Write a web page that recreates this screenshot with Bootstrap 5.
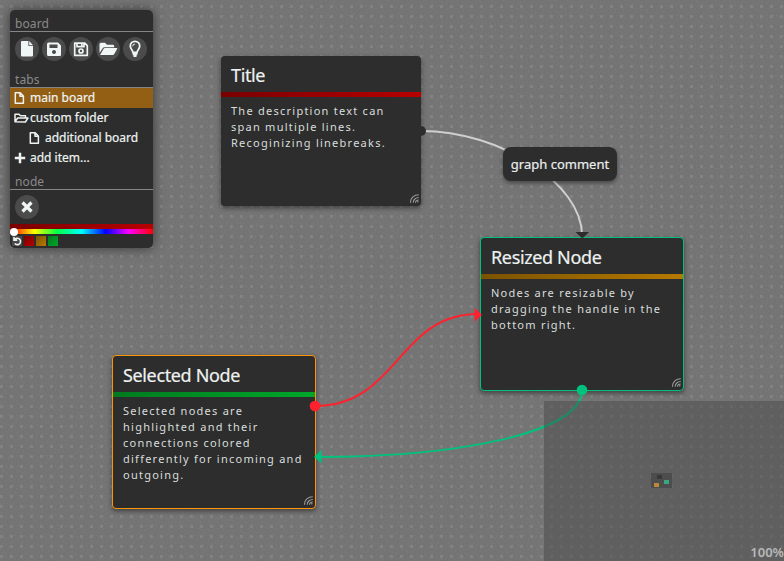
<!DOCTYPE html>
<html lang="en">
<head>
<meta charset="utf-8">
<meta name="viewport" content="width=device-width, initial-scale=1">
<title>Node board</title>
<link rel="stylesheet" href="https://cdn.jsdelivr.net/npm/bootstrap@5.3.0/dist/css/bootstrap.min.css">
<style>
body{font-family:"Noto Sans",sans-serif;background:#737373;color:#e9eeed}
.board{width:784px;height:561px;background:radial-gradient(circle at 1.5px 6.5px,#818181 1.4px,#81818100 2px) 0 0/10px 10px,#747474}
.layer{left:0;top:0;width:784px;height:561px;pointer-events:none}
.grain{opacity:.06}
.tools{left:10px;top:10px;width:143px;height:238px;background:#2d2d2d;border-radius:5px;box-shadow:0 0 12px #0008;font-size:12px;overflow:hidden}
.heading{color:#8a8a8a;border-bottom:1px solid #858585;padding-left:5px;letter-spacing:.1px;line-height:16px;flex:none}
.board-heading{height:22px;padding-top:6px}
.tabs-heading{height:10px;line-height:3px}
.node-heading{height:22px;padding-top:6px}
.icons{gap:3px;padding:5px 0 0 5px;height:46px;flex:none}
.round{width:24px;height:24px;background:#4b4b4b;border:0;border-radius:50%;flex:none}
.round svg{display:block;width:24px;height:24px}
.single{padding:5px 5px 0;height:34px;flex:none}
.entry{height:20px;line-height:20px;padding-left:4px;color:#eef3f2;white-space:nowrap;flex:none}
.entry svg{width:12px;height:12px;margin-right:4px;flex:none}
.entry svg.wide{width:15px;margin-right:1px}
.entry.current{background:#935f15}
.entry.child{padding-left:19px}
.tone{height:5px;background:linear-gradient(90deg,#7a0000,#b80000)}
.hues{height:5px;background:linear-gradient(90deg,red,#ff0 17%,#0f4 33%,#0ff 50%,#00f 67%,#f0f 83%,#f00)}
.knob{left:0;top:-1px;width:8px;height:8px;background:#fff;border-radius:50%}
.swatches{gap:2px;padding:2px 0 0 2px}
.swatch{width:10px;height:10px}
.red{background:linear-gradient(135deg,#7a0000,#b80000)}
.amber{background:linear-gradient(135deg,#7a5200,#b87a00)}
.green{background:linear-gradient(135deg,#007a1f,#00a82b)}
.node{width:200px;height:150px;background:#2d2d2d;border-radius:4px;box-shadow:0 2px 5px #0007}
.node.edged{width:204px;height:154px;border:1px solid}
.node h2{font-size:18px;line-height:38px;height:36px;padding-left:10px;margin:0;font-weight:400;letter-spacing:-.36px;color:#edf2f1;-webkit-text-stroke:.2px #edf2f1}
.node .stripe{height:5px}
.node p{font-size:11px;line-height:16px;letter-spacing:1.25px;margin:0;padding:6px 4px 0 10px;color:#d8dddc;white-space:nowrap}
.grip{right:2px;bottom:3px;width:9px;height:9px}
.n1{left:221px;top:56px}.n2{left:480px;top:237px;border-color:#00c27d!important}.n3{left:112px;top:355px;border-color:#ff9500!important}
.comment{left:503px;top:147px;width:114px;height:34px;padding-top:2px;border-radius:8px;background:#2d2d2d;box-shadow:0 2px 4px #0006;font-size:13px;-webkit-text-stroke:.2px #e9eeed}
.overview{left:544px;top:401px;width:240px;height:160px;background:#45454570}
.viewport{left:107px;top:72px;width:21px;height:15px;background:#4d4d4d}
.zoom{right:0;bottom:0;font-size:13px;font-weight:600;line-height:17px;color:#b9b9b9}
.entry{-webkit-text-stroke:.2px #eef3f2}
</style>
<script src="https://cdn.jsdelivr.net/npm/bootstrap@5.3.0/dist/js/bootstrap.bundle.min.js"></script>
</head>
<body class="m-0 overflow-hidden">
<svg class="d-none"><defs>
<symbol id="page" viewBox="0 0 12 12"><path d="M1.300.8h4.900l3.200 3.200v7.200H1.300zM6 1v3.300h3.300" fill="none" stroke="#eef3f2" stroke-width="1.500" stroke-linejoin="round"/></symbol>
<symbol id="grip" viewBox="0 0 9 9"><g fill="none" stroke="#999" stroke-width="1.100"><path d="M.5 8.700C.5 4 4 .7 8.800.7M3.200 8.700c0-3 2.400-5.200 5.600-5.200M5.500 8.800c0-1.500 1.400-2.800 3.200-2.800"/></g><circle cx="7.700" cy="7.800" r=".8" fill="#999"/></symbol>
</defs></svg>
<main class="board position-relative overflow-hidden">
<svg class="layer grain position-absolute"><filter id="noise"><feTurbulence type="fractalNoise" baseFrequency=".6" numOctaves="2" seed="4"/><feColorMatrix values="0 0 0 0 .7  0 0 0 0 .7  0 0 0 0 .7  3 0 0 0 -1.5"/></filter><rect width="784" height="561" filter="url(#noise)"/></svg>

<!-- Connection lines -->
<svg class="layer position-absolute" fill="none" stroke-width="2">
<path d="M421 131C501 131 582 184 582 235" stroke="#cfcfcf"/>
<path d="M315 406C398 406 398 314 478 314" stroke="#ff212d"/>
<path d="M582 390C582 435 448 457 318 457" stroke="#00c27d"/>
</svg>

<section class="node position-absolute n1"><h2>Title</h2><div class="stripe red"></div><p>The description text can<br>span multiple lines.<br>Recoginizing linebreaks.</p><svg class="grip position-absolute"><use href="#grip"/></svg></section>
<section class="node edged position-absolute n2"><h2>Resized Node</h2><div class="stripe amber"></div><p>Nodes are resizable by<br>dragging the handle in the<br>bottom right.</p><svg class="grip position-absolute"><use href="#grip"/></svg></section>
<section class="node edged position-absolute n3"><h2>Selected Node</h2><div class="stripe green"></div><p>Selected nodes are<br>highlighted and their<br>connections colored<br>differently for incoming and<br>outgoing.</p><svg class="grip position-absolute"><use href="#grip"/></svg></section>
<div class="comment position-absolute d-flex align-items-center justify-content-center">graph comment</div>

<!-- Minimap -->
<div class="overview position-absolute"><div class="viewport position-absolute"></div>
<svg class="position-absolute top-0 start-0 w-100 h-100"><path d="M113 74h5v4h-5z" fill="#383838"/><path d="M120 79h5v4h-5z" fill="#38a780"/><path d="M110 82h5v4h-5z" fill="#bd8739"/></svg>
<span class="zoom position-absolute">100%</span></div>

<!-- Ports and arrowheads -->
<svg class="layer position-absolute">
<path d="M421 126a5 5 0 0 1 0 10z" fill="#2d2d2d"/><path d="M575.500 232h13.500l-6.700 6.500z" fill="#2d2d2d"/>
<circle cx="315" cy="406" r="5.300" fill="#ff212d"/><path d="M474.500 308v13.500l7.500-6.700z" fill="#ff212d"/>
<circle cx="582" cy="390" r="5.300" fill="#00c27d"/><path d="M321.500 450v13.500l-7.500-6.700z" fill="#00c27d"/>
</svg>

<aside class="tools position-absolute d-flex flex-column">
<div class="heading board-heading">board</div>
<div class="d-flex icons">
<button class="round p-0"><svg viewBox="0 0 24 24" fill="#f0f6f5"><path d="M6 5q0-1 1-1h6.400v5H18v9.500q0 1-1 1H7q-1 0-1-1zM14.200 4 18 8.200h-3.800z"/></svg></button>
<button class="round p-0"><svg viewBox="0 0 24 24"><path fill="#f0f6f5" fill-rule="evenodd" d="M6.500 5.500H16l3 3V18q0 1-1 1H6.500q-1.500 0-1.500-1.500V7q0-1.500 1.500-1.500zM7.500 7.500V11h8V7.500zM12 13a2 2 0 1 0 .01 0z"/></svg></button>
<button class="round p-0"><svg viewBox="0 0 24 24" fill="none" stroke="#f0f6f5" stroke-width="1.700" stroke-linejoin="round"><path d="M6 6.200h9.800l2.500 2.500v9.600H5.700V6.200zM8 6v3.700h7V6M12.800 6v3"/><circle cx="12" cy="14" r="2"/></svg></button>
<button class="round p-0"><svg viewBox="0 0 24 24" fill="#f0f6f5"><path d="M3.500 16V7.300q0-1.500 1.500-1.500h4l2 2h6q1.200 0 1.200 1.500v1H8.500q-1.200 0-2 1.200zM4 18l3.500-6q.5-1 1.500-1H20.700q.8 0 .4.900l-3 5.300q-.4.800-1.400.8z"/></svg></button>
<button class="round p-0"><svg viewBox="0 0 24 24" fill="none" stroke="#f0f6f5" stroke-width="1.800"><path d="M10 15.500C9.700 13 7.300 12.200 7.300 9a4.700 4.700 0 0 1 9.400 0c0 3.200-2.400 4-2.700 6.500zM9.700 17.300h4.600M10.500 19h3"/><path d="M9.700 9.300A2.300 2.300 0 0 1 12 7" stroke-width="1"/></svg></button>
</div>
<div class="heading tabs-heading">tabs</div>
<div class="entry current d-flex align-items-center"><svg><use href="#page"/></svg>main board</div>
<div class="entry d-flex align-items-center"><svg class="wide" viewBox="0 0 15 12" fill="none" stroke="#eef3f2" stroke-width="1.500" stroke-linejoin="round"><path d="M1 9.500V2.300h4l1.500 1.500h5V6M1 9.800 3.600 6H14l-2.600 4z"/></svg>custom folder</div>
<div class="entry child d-flex align-items-center"><svg><use href="#page"/></svg>additional board</div>
<div class="entry d-flex align-items-center"><svg viewBox="0 0 12 12"><path d="M6 .8v10.400M.8 6h10.400" stroke="#eef3f2" stroke-width="2.500"/></svg>add item...</div>
<div class="heading node-heading">node</div>
<div class="single"><button class="round p-0"><svg viewBox="0 0 24 24"><path d="m7.500 7.500 9 9m0-9-9 9" stroke="#f0f6f5" stroke-width="3.200"/></svg></button></div>
<div class="tone flex-shrink-0"></div><div class="hues position-relative flex-shrink-0"><div class="knob position-absolute"></div></div>
<div class="swatches d-flex"><div class="swatch"><svg class="d-block" viewBox="0 0 10 10"><path fill="#484848" d="M0 0h10v10H0z"/><path d="M2 1v3.300h3.300M2.500 4A3.200 3.200 0 1 1 2.800 7.400" fill="none" stroke="#eef3f2" stroke-width="1.600"/></svg></div><div class="swatch red"></div><div class="swatch amber"></div><div class="swatch green"></div></div>
</aside>
</main>
</body>
</html>
